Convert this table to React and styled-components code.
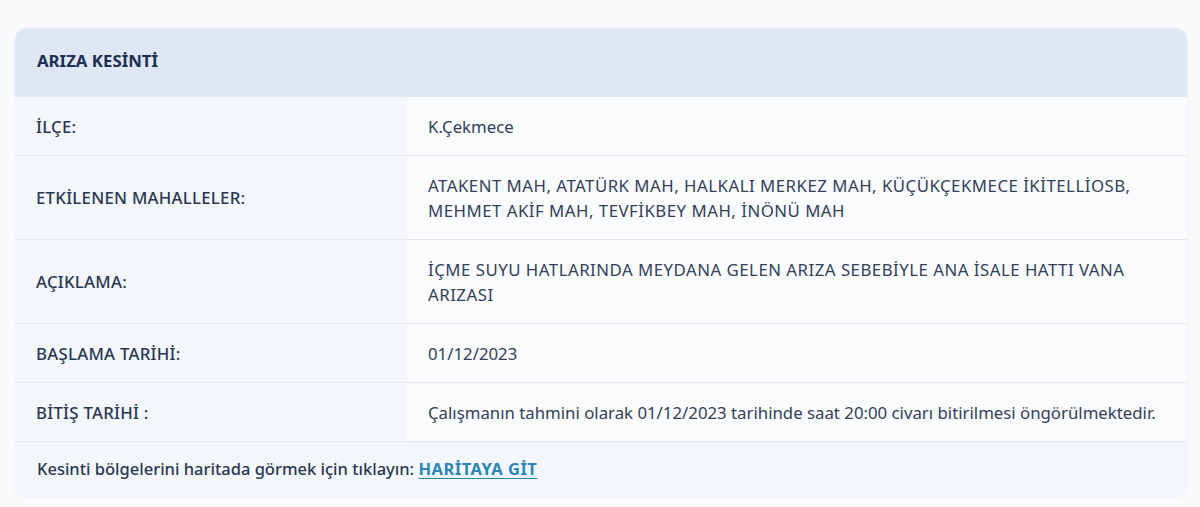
import React from 'react';
import styled, { createGlobalStyle } from 'styled-components';

const GlobalStyle = createGlobalStyle`
  html, body {
    margin: 0;
    padding: 0;
    background: #f9fafc;
  }
  body {
    font-family: "Noto Sans", "Liberation Sans", sans-serif;
  }
`;

const rows = [
  { label: 'İLÇE:', value: 'K.Çekmece' },
  {
    label: 'ETKİLENEN MAHALLELER:',
    value: 'ATAKENT MAH, ATATÜRK MAH, HALKALI MERKEZ MAH, KÜÇÜKÇEKMECE İKİTELLİOSB, MEHMET AKİF MAH, TEVFİKBEY MAH, İNÖNÜ MAH',
    caps: true,
  },
  {
    label: 'AÇIKLAMA:',
    value: 'İÇME SUYU HATLARINDA MEYDANA GELEN ARIZA SEBEBİYLE ANA İSALE HATTI VANA ARIZASI',
    caps: true,
  },
  { label: 'BAŞLAMA TARİHİ:', value: '01/12/2023' },
  {
    label: 'BİTİŞ TARİHİ :',
    value: 'Çalışmanın tahmini olarak 01/12/2023 tarihinde saat 20:00 civarı bitirilmesi öngörülmektedir.',
  },
];

const App = () => {
  return (
    <Page>
      <GlobalStyle />
      <Card>
        <Header>ARIZA KESİNTİ</Header>
        {rows.map((row) => (
          <Row key={row.label}>
            <Label>{row.label}</Label>
            <Value $caps={row.caps}>{row.value}</Value>
          </Row>
        ))}
        <Footer>
          Kesinti bölgelerini haritada görmek için tıklayın:{' '}
          <MapLink href="#">HARİTAYA GİT</MapLink>
        </Footer>
      </Card>
    </Page>
  );
};

const Page = styled.div`
  padding: 28px 13px 12px 15px;
  box-sizing: border-box;
  width: 1200px;
  height: 507px;
`;

const Card = styled.div`
  background: #f4f6fa;
  border-radius: 12px;
  box-shadow: 0 1px 4px rgba(30, 50, 90, 0.06);
  overflow: hidden;
`;

const Header = styled.div`
  background: #dfe7f5;
  color: #1d2f52;
  font-size: 16.8px;
  font-weight: 700;
  line-height: 20px;
  padding: 23px 22px 25px;
  border-bottom: 1px solid #e2e8f1;
`;

const Row = styled.div`
  display: grid;
  grid-template-columns: 392px 1fr;
  border-bottom: 1px solid #e5e9ef;
`;

const Label = styled.div`
  background: #f3f6fa;
  color: #2a3752;
  font-size: 16.8px;
  font-weight: 500;
  letter-spacing: 0.25px;
  line-height: 25px;
  padding: 16.5px 21px;
  display: flex;
  align-items: center;
`;

const Value = styled.div`
  background: #fafbfd;
  color: #34405a;
  font-size: 16.8px;
  letter-spacing: ${(p) => (p.$caps ? '0.5px' : '0')};
  line-height: 25px;
  padding: 16.5px 21px;
`;

const Footer = styled.div`
  background: #f3f6fa;
  color: #2a3752;
  font-size: 16.5px;
  font-weight: 500;
  line-height: 26px;
  padding: 14px 22px;
`;

const MapLink = styled.a`
  color: #2a86b4;
  font-weight: 700;
  letter-spacing: 0.5px;
  text-decoration: underline;
  text-underline-offset: 3px;
`;

export default App;
